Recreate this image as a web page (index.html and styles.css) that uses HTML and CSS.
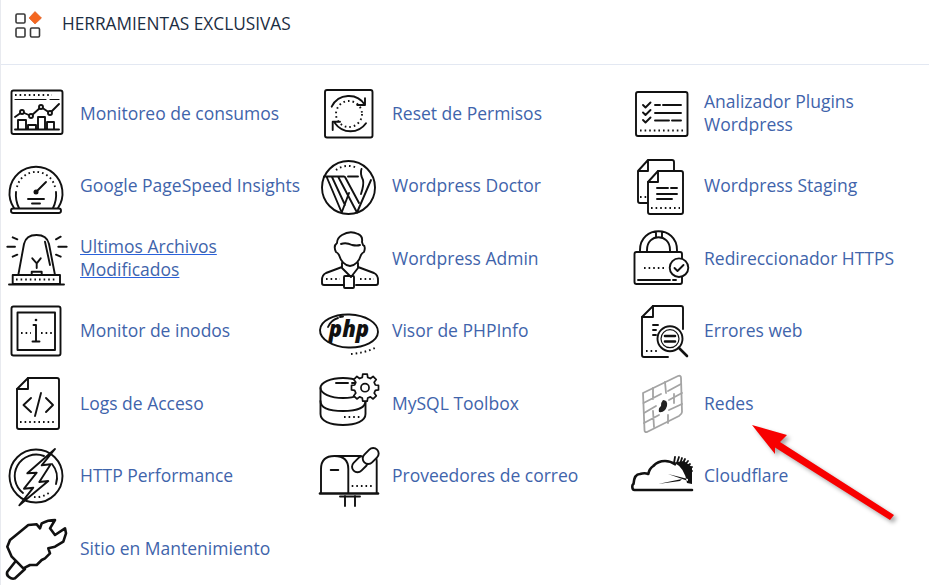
FILE: index.html
```html
<!DOCTYPE html>
<html lang="es">
<head>
  <meta charset="UTF-8" />
  <title>Herramientas Exclusivas</title>
  <link rel="stylesheet" href="styles.css">
</head>
<body>
  <div class="panel">
    <div class="panel-head">
      <svg class="head-icon" viewBox="0 0 30 30">
        <rect x="1" y="5" width="9" height="9" rx="1.2" />
        <rect x="1" y="19" width="9" height="9" rx="1.2" />
        <rect x="15.500" y="19" width="9" height="9" rx="1.2" />
        <path class="diamond" d="M20 2.500 L26.500 9 L20 15 L14 9 Z" />
      </svg>
      <span>HERRAMIENTAS EXCLUSIVAS</span>
    </div>

    <div class="tools">
      <!-- Fila 1 -->
      <a class="tool" href="#">
        <svg class="ico" viewBox="0 0 60 60">
          <rect x="3.500" y="7.500" width="51" height="43.500" rx="2" />
          <path class="dots" d="M7 12 H44" />
          <path class="thin" d="M7 16.500 H38 M42 16.500 H51" />
          <path d="M7 34 L14 29 L23 33 L33 24 L42 30 L51 21" />
          <circle class="white" cx="14" cy="29" r="2" /><circle class="white" cx="23" cy="33" r="2" />
          <circle class="white" cx="33" cy="24" r="2" /><circle class="white" cx="42" cy="30" r="2" />
          <path d="M7 46.500 H51 M10 46 V37 H18 V46 M20 46 V42 H28 V46 M30 46 V34 H37 V46 M39 46 V39 H46 V46" />
        </svg>
        <span>Monitoreo de consumos</span>
      </a>
      <a class="tool" href="#">
        <svg class="ico" viewBox="0 0 60 60">
          <rect x="5" y="7" width="47.500" height="47.500" rx="2" />
          <path d="M11.700 23.700 A19 19 0 0 1 45 22 M45 15.300 V22 H37.300 M46 40.300 A19 19 0 0 1 15 40.300 M12.700 47 V38.700 H20" />
          <circle class="dots" cx="29" cy="31" r="13" />
        </svg>
        <span>Reset de Permisos</span>
      </a>
      <a class="tool" href="#">
        <svg class="ico" viewBox="0 0 60 60">
          <rect x="4" y="9" width="51.500" height="44" rx="2" />
          <path d="M11 22 L13.500 24.500 L18.500 19.500 M11 29.500 L13.500 32 L18.500 27 M11 37 L13.500 39.500 L18.500 34.500" />
          <path d="M23 22 H28 M31 22 H49 M23 30 H49 M23 37.500 H37 M40 37.500 H49" />
          <path class="dots" d="M8 47.500 H52" />
        </svg>
        <span>Analizador Plugins Wordpress</span>
      </a>

      <!-- Fila 2 -->
      <a class="tool" href="#">
        <svg class="ico" viewBox="0 0 60 60">
          <path d="M6 52 A26.500 26.500 0 1 1 50 52" />
          <path d="M11 52 C8 46 7.500 41 8 36 M45 52 C48 46 48.500 41 48 36" />
          <path class="dots" d="M9 31 A19.500 19.500 0 0 1 47 31" />
          <path d="M28 36 L38 26 M20 43 H36 M24 47.500 H32" />
          <circle class="solid" cx="28" cy="36" r="2.500" />
          <rect x="3" y="52.500" width="50" height="4.500" rx="2.200" />
        </svg>
        <span>Google PageSpeed Insights</span>
      </a>
      <a class="tool" href="#">
        <svg class="ico" viewBox="0 0 60 60">
          <circle cx="28.500" cy="31.500" r="26.500" />
          <path class="dots" d="M16 14 A20 20 0 0 1 37 12" />
          <path d="M4 20.500 H24 M28 20.500 H38 M6.700 21 L21.700 56.500 L29 37 M12 21 L25 49 M18.300 21 L37 56.500 M25 21 L39 47" />
          <path d="M37 56.500 L51 24 M41.500 13 C40 17 41 20 43 24 C44 28 43 32 41 38" />
        </svg>
        <span>Wordpress Doctor</span>
      </a>
      <a class="tool" href="#">
        <svg class="ico" viewBox="0 0 60 60">
          <path d="M16 4 H40 Q42 4 42 6 V15 M16 4 L6 15 V45 Q6 47 8 47 H15 M6 15 H16 V4" />
          <path class="dots" d="M8 41 H15" />
          <path class="fillw" d="M26 15 H49 Q51 15 51 17 V56 Q51 58 49 58 H18 Q16 58 16 56 V26 Z" />
          <path d="M16 26 H26 V15" />
          <path d="M25 32 H36 M39 32 H45 M25 38 H45 M25 43 H40" />
          <path class="dots" d="M19 52 H48" />
        </svg>
        <span>Wordpress Staging</span>
      </a>

      <!-- Fila 3 -->
      <a class="tool active" href="#">
        <svg class="ico" viewBox="0 0 60 60">
          <path d="M10.300 47 L16 16 Q18 7 28.500 7 Q39 7 41 16 L47 47" />
          <path d="M37 13.700 L42 37 M24.300 30.300 L28.700 35.300 L32.700 30.300 M28.700 35.300 V40 M23.700 47 V43.700 H33.700 V47" />
          <rect x="4.700" y="47" width="47.300" height="9" />
          <path class="dots" d="M8 51.500 H49" />
          <path d="M1 56.500 H56 M-.7 18.700 H7 M50.300 18.700 H58.700 M4.700 9.300 L9.300 11.300 M48 11.300 L52.700 8.700 M4.700 28.700 L9.300 26.700 M48 26.700 L52.700 28.700" />
        </svg>
        <span>Ultimos Archivos Modificados</span>
      </a>
      <a class="tool" href="#">
        <svg class="ico" viewBox="0 0 60 60">
          <path d="M22 7 Q30 2 38 6 Q43 8 42 14 L43 17 Q46 18 44 24 Q42 25 41 27 Q38 37 30 38 Q22 37 19 27 Q18 25 16 24 Q13 18 17 15 Q17 10 22 7 Z" />
          <path d="M21 16 Q26 14 32 17 Q37 18 40 17" />
          <path d="M22 35 V40 L31 49 L38 40 V35 M22 39 L6 45 Q2 47 2 52 V55 Q2 57 4 57 H24 M38 39 L54 45 Q58 47 58 52 V55 Q58 57 56 57 H36" />
          <rect x="24" y="48" width="10" height="12" rx="1" />
          <path class="dots" d="M6 51 H20 M40 51 H54" />
        </svg>
        <span>Wordpress Admin</span>
      </a>
      <a class="tool" href="#">
        <svg class="ico" viewBox="0 0 60 60">
          <rect x="2.500" y="24" width="47.500" height="32" rx="2" />
          <path d="M8 24 V22 C8 -3 45 -3 45 22 V24 M15 24 V22 C15 5 38 5 38 22 V24 M24 3.500 V9 M30 3.500 V9" />
          <path class="dots" d="M12 40 H32" />
          <path d="M6 52 H38 M41 52 H44" />
          <circle class="fillw" cx="47" cy="39.700" r="9.300" />
          <path d="M42.500 40 L45.500 43 L51.500 37" />
        </svg>
        <span>Redireccionador HTTPS</span>
      </a>

      <!-- Fila 4 -->
      <a class="tool" href="#">
        <svg class="ico" viewBox="0 0 60 60">
          <rect x="3.500" y="5.500" width="49" height="49" rx="2" />
          <rect x="9.500" y="11.500" width="37.500" height="37.500" />
          <circle class="solid" cx="28" cy="19" r="1.300" />
          <path d="M25.500 24 H28 V40 M24.500 40.500 H31.500" />
          <path class="dots" d="M13 32 H23 M33 32 H44" />
        </svg>
        <span>Monitor de inodos</span>
      </a>
      <a class="tool" href="#">
        <svg class="ico" viewBox="0 0 60 60">
          <ellipse cx="29" cy="30" rx="29" ry="16.500" transform="rotate(2 29 30)" />
          <path d="M8 26 Q11 19 18 17 M20 16 L23 15.500" />
          <text class="php-mark" x="29" y="36" text-anchor="middle">php</text>
          <path class="dots" d="M31 53 Q44 52 55 47" />
        </svg>
        <span>Visor de PHPInfo</span>
      </a>
      <a class="tool" href="#">
        <svg class="ico" viewBox="0 0 60 60">
          <path d="M10 16 L21 5 H49 Q51 5 51 7 V28 M10 16 V54 Q10 56 12 56 H36" />
          <path d="M10 16 H21 V5" />
          <path d="M21 24 H26 M21 29 H24 M21 34 H24" />
          <path class="dots" d="M14 50 H26" />
          <circle class="fillw" cx="38" cy="37.700" r="12.500" />
          <circle class="thin" cx="38" cy="37.700" r="9" />
          <path class="bold" d="M33 35 H43 M33 40.500 H43 M47 47 L55 55" />
        </svg>
        <span>Errores web</span>
      </a>

      <!-- Fila 5 -->
      <a class="tool" href="#">
        <svg class="ico" viewBox="0 0 60 60">
          <path d="M20 5 H49 Q51 5 51 7 V54 Q51 56 49 56 H11 Q9 56 9 54 V16 Z" />
          <path d="M9 16 H20 V5" />
          <path d="M23 25 L15.500 32 L23 39 M38 25 L45 32 L38 39 M33 20 L27 43" />
          <path class="dots" d="M12 49 H48" />
        </svg>
        <span>Logs de Acceso</span>
      </a>
      <a class="tool" href="#">
        <svg class="ico" viewBox="0 0 60 60">
          <ellipse cx="23" cy="15" rx="22.500" ry="10" />
          <path d="M.5 15 V41 C.5 48 10 52 23 52 C36 52 45.500 48 45.500 41 V20" />
          <path d="M.5 28 C.5 35 10 38 23 38 C36 38 45.500 35 45.500 28" />
          <path d="M16 10 H28 M32 10 H35" />
          <path class="dots" d="M24 44 H40" />
          <g transform="translate(45 14.700) scale(.9) translate(-45 -17)">
            <path class="fillw" d="M42.500 2 H47.500 L48 5.500 L51 6.800 L54 4.500 L57.500 8 L55.200 11 L56.500 14 L60 14.500 V19.500 L56.500 20 L55.200 23 L57.500 26 L54 29.500 L51 27.200 L48 28.500 L47.500 32 H42.500 L42 28.500 L39 27.200 L36 29.500 L32.500 26 L34.800 23 L33.500 20 L30 19.500 V14.500 L33.500 14 L34.800 11 L32.500 8 L36 4.500 L39 6.800 L42 5.500 Z" />
            <circle cx="45" cy="17" r="4.500" />
          </g>
        </svg>
        <span>MySQL Toolbox</span>
      </a>
      <a class="tool gray" href="#">
        <svg class="ico" viewBox="0 0 60 60">
          <path d="M11 20 L46 3 Q49 2 49 5 L50 39 Q50 41 47 43 L15 59 Q12.500 59.500 12.500 57 Z" />
          <path d="M11.500 30 L29 21 M36 18 L49 11 M12 40 L24 33 M37 27 L50 20 M12 50 L27 42 M37 37 L50 31 M21 15 L21 26 M33 9 L34 20 M21 38 L22 54 M36 42 L36 50 M42 21 L42 30" />
          <path class="blob" d="M31 27 Q36 27 35 33 Q33 40 27 39 Q26 35 29 33 Q29 29 31 27 Z" />
        </svg>
        <span>Redes</span>
      </a>

      <!-- Fila 6 -->
      <a class="tool" href="#">
        <svg class="ico" viewBox="0 0 60 60">
          <circle cx="28" cy="30" r="26.500" />
          <path d="M15 47 A21.500 21.500 0 0 1 36 10 M44 18 A21.500 21.500 0 0 1 48 38" />
          <path class="dots" d="M26 51 A21.500 21.500 0 0 0 42 46" />
          <path class="fillw" d="M47 3 L19.300 27.300 L28.700 26.700 L16 42.700 L25.300 41.700 L11.300 59.300 L40.300 35 L31.300 36 L42.700 18.300 L33.700 19.300 Z" />
        </svg>
        <span>HTTP Performance</span>
      </a>
      <a class="tool" href="#">
        <svg class="ico" viewBox="0 0 60 60">
          <path d="M1 47 V23 Q1 10 14.500 10 Q28.300 10 28.300 23 V47 M14.500 10 H41 M48 10 H52 Q56.700 10 56.700 15 V47" />
          <path class="bold" d="M0 47.500 H58" />
          <path d="M10.700 24 H18.300" />
          <path class="dots" d="M31.700 40 H53" />
          <path d="M25 50 V60 M35 50 V60 M20 50.500 H40" />
          <rect class="fillw" x="34.500" y="9.300" width="11" height="18" rx="5.500" transform="rotate(45 40 18.300)" />
          <rect class="fillw" x="45.200" y="1" width="11" height="18" rx="5.500" transform="rotate(45 50.700 10)" />
        </svg>
        <span>Proveedores de correo</span>
      </a>
      <a class="tool" href="#">
        <svg class="ico" viewBox="0 0 60 60">
          <path class="bold" d="M60 44 H2.500 C-.5 44 0 38 1.500 38 C2 31 5 28 8 28 C11 27 14 27 16.300 28 C17 24 19 21.500 21.300 20 C25 16 29 15 33 15 C37 15 40 16 43 18.300" />
          <path class="rays" d="M42 17 L43 11 M45 17 L47 11 M48 18 L50 12 M50 19 L53 13 M52 20 L56 15 M53 22 L58 18 M54 25 L60 21 M55 28 L60 25" />
          <path class="solid" d="M42 16.500 Q53 22 55 37 L60 38 V21 L52 15 Z M36 28 L56 33 L56 35 Z M26 38 L50 33 L48 35 Z" />
        </svg>
        <span>Cloudflare</span>
      </a>

      <!-- Fila 7 -->
      <a class="tool" href="#">
        <svg class="ico" viewBox="0 0 60 60">
          <path class="bold" d="M-.7 28.700 L2 22 L10.300 15.300 L20.300 7 L28.700 6.300 L32 10.300 L33.700 5.300 Q40 2 47 2 L42 10.300 L47 17 L57 10.300 L58 15.300 L55.300 23.700 L47 28.700 L40.300 30.300 L42 35.300 L37 40.300 L33.700 42 L28.700 47 L22 47 L15.300 50.300 L8.700 43.700 L3.700 38.700 Z" />
          <path class="bold" d="M7 44 L-.7 53.700 Q-2 57 1 59 Q4 61.500 7 60.300 L17 51" />
        </svg>
        <span>Sitio en Mantenimiento</span>
      </a>
    </div>

    <!-- Flecha roja encima de la captura -->
    <svg class="arrow" viewBox="0 0 929 585">
      <path d="M752 425 L787 435 L780 442 L894 515 L890 520 L775 447.500 L775 454 Z" />
    </svg>
  </div>
</body>
</html>
```

FILE: styles.css
```css
* {
  box-sizing: border-box;
}

html, body {
  margin: 0;
  height: 100%;
  overflow: hidden;
  background: #fff;
}

body {
  font-family: "Open Sans", sans-serif;
}

.panel {
  position: relative;
  height: 585px;
  border-left: 1px solid #e8eaef;
}

.panel-head {
  display: flex;
  align-items: center;
  gap: 17px;
  height: 65px;
  padding: 0 0 17px 14px;
  border-bottom: 1px solid #e3e8f2;
  color: #1b2d42;
  font-size: 17.25px;
}

.head-icon {
  width: 30px;
  height: 30px;
  overflow: visible;
  fill: none;
  stroke: #3a3a3a;
  stroke-width: 1.6;
}

.head-icon .diamond {
  fill: #f4661f;
  stroke: #d9581b;
  stroke-width: .6;
}

.tools {
  display: grid;
  grid-template-columns: repeat(3, 312px);
  grid-auto-rows: 72.5px;
  padding: 12px 0 0 7px;
}

.tool {
  display: flex;
  align-items: center;
  gap: 12px;
  color: #3f64ab;
  font-size: 17.5px;
  line-height: 23px;
  text-decoration: none;
}

.tool.active span {
  text-decoration: underline;
  text-decoration-color: #2a62dd;
}

.ico {
  flex: none;
  width: 60px;
  height: 60px;
  overflow: visible;
  fill: none;
  stroke: #111;
  stroke-width: 1.9;
  stroke-linecap: round;
  stroke-linejoin: round;
}

.ico .dots {
  stroke-dasharray: 1.6 3;
  stroke-linecap: butt;
}

.ico .thin { stroke-width: 1.2; }
.ico .bold { stroke-width: 2.6; }
.ico .rays { stroke-width: 1.8; }
.ico .white, .ico .fillw { fill: #fff; }
.ico .solid { fill: #111; stroke: none; }

.ico .php-mark {
  fill: #111;
  stroke: none;
  font-family: "Open Sans", sans-serif;
  font-size: 22px;
  font-weight: 800;
  font-style: italic;
}

.tool.gray .ico {
  stroke: #a4a4a4;
  stroke-width: 1.8;
}

.tool.gray .blob {
  fill: #222;
  stroke: none;
}

.arrow {
  position: absolute;
  top: 0;
  left: -1px;
  width: 929px;
  height: 585px;
  pointer-events: none;
  filter: drop-shadow(3px 3px 2px rgba(0, 0, 0, .35));
}

.arrow path {
  fill: #f80000;
}
```
